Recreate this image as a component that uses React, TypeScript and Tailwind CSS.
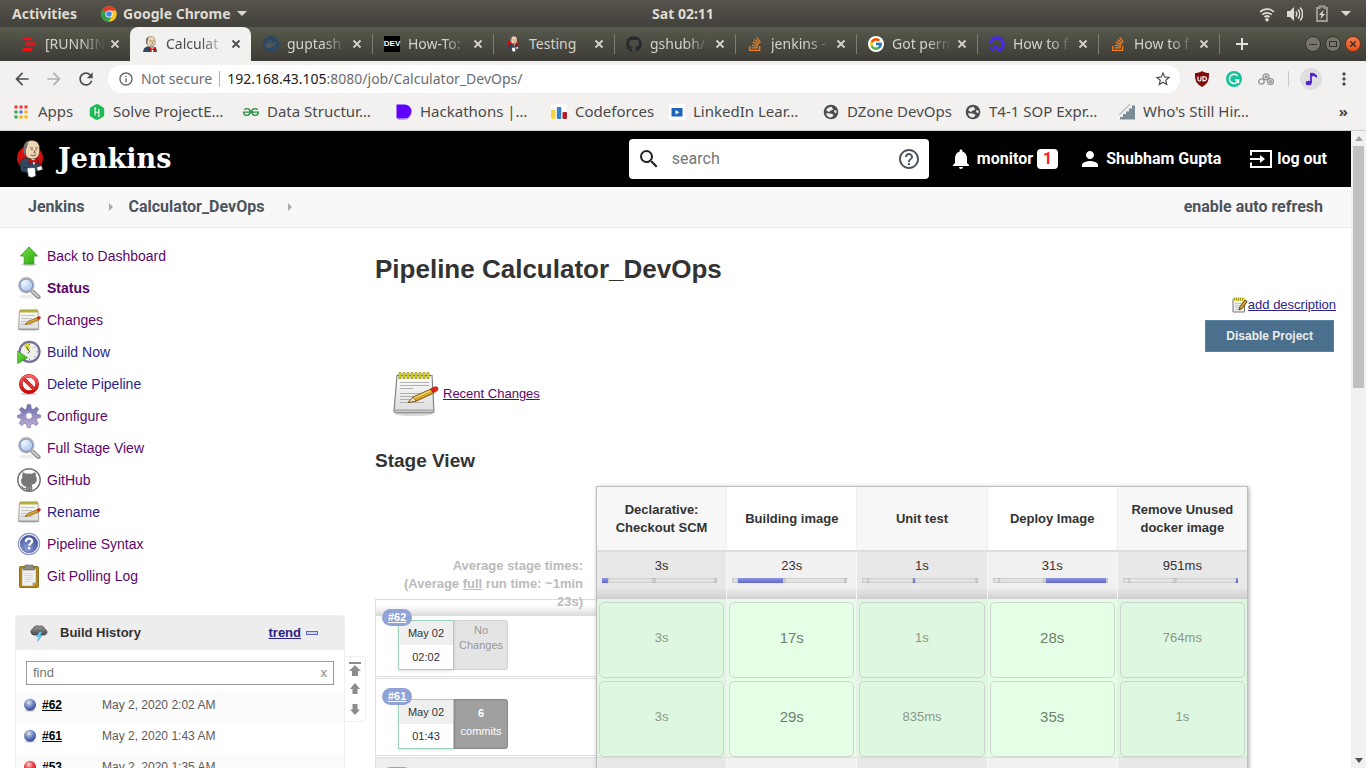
import React from "react";
import { FaGithub, FaStackOverflow, FaDocker, FaHackerrank, FaDigitalOcean } from "react-icons/fa";
import { FcGoogle } from "react-icons/fc";
import { SiGeeksforgeeks } from "react-icons/si";
import { MdNotifications, MdPerson, MdStarBorder, MdHelpOutline, MdSearch, MdRefresh, MdArrowBack, MdArrowForward, MdInfoOutline, MdMoreVert } from "react-icons/md";

type IconProps = { className?: string };

function SharedGradients() {
  return (
    <svg width="0" height="0" className="absolute" aria-hidden="true">
      <defs>
        <linearGradient id="paper" x1="0" y1="0" x2="0" y2="1">
          <stop offset="0" stopColor="#fdfdfd" />
          <stop offset="1" stopColor="#dcdcdc" />
        </linearGradient>
        <linearGradient id="leaf" x1="0" y1="0" x2="1" y2="1">
          <stop offset="0" stopColor="#7be04a" />
          <stop offset="1" stopColor="#1fa80c" />
        </linearGradient>
        <linearGradient id="gear" x1="0" y1="0" x2="0" y2="1">
          <stop offset="0" stopColor="#6a70ab" />
          <stop offset="1" stopColor="#c3acd4" />
        </linearGradient>
        <radialGradient id="lens" cx="0.35" cy="0.3" r="0.8">
          <stop offset="0" stopColor="#f2f8ff" />
          <stop offset="1" stopColor="#9db9ea" />
        </radialGradient>
        <radialGradient id="help" cx="0.4" cy="0.75" r="0.8">
          <stop offset="0" stopColor="#8c9cd8" />
          <stop offset="1" stopColor="#3b4c96" />
        </radialGradient>
        <radialGradient id="ballBlue" cx="0.4" cy="0.3" r="0.7">
          <stop offset="0" stopColor="#e3e9e8" />
          <stop offset="0.45" stopColor="#7e93cb" />
          <stop offset="1" stopColor="#31459a" />
        </radialGradient>
        <radialGradient id="ballRed" cx="0.4" cy="0.3" r="0.7">
          <stop offset="0" stopColor="#ffdcdc" />
          <stop offset="0.45" stopColor="#f0505a" />
          <stop offset="1" stopColor="#c40f1c" />
        </radialGradient>
        <linearGradient id="cloud" x1="0" y1="0" x2="0" y2="1">
          <stop offset="0" stopColor="#9a9a9a" />
          <stop offset="1" stopColor="#4c4c4c" />
        </linearGradient>
        <linearGradient id="ban" x1="0" y1="0" x2="0" y2="1">
          <stop offset="0" stopColor="#f36a6a" />
          <stop offset="1" stopColor="#cc0505" />
        </linearGradient>
      </defs>
    </svg>
  );
}

function ButlerHead() {
  return (
    <>
      <path d="M7.500 6.500C8 2.500 11.500.5 15.500.5c4.500.1 7.500 3 7.500 7.500 0 2.500.2 4-.3 6.200-.7 2.800-3.600 4.800-7 4.800-4 0-6.700-2.500-7.300-6.500z" fill="#efd5b4" stroke="#4b3f32" strokeWidth=".7" />
      <path d="M10.500 2.500C7 4 6 10 7.800 14.500l2-.8c-.8-2.800-.2-5 .8-7 .8-1.700.3-3 1.700-4.500z" fill="#707372" />
      <path d="M13.500 8.300c1-.8 2-.8 3-.1M18.700 8.100c.8-.6 1.700-.5 2.600 0M14.500 9.800h1.600M19 9.800h1.500M17.500 10.300l1.200 2.500-1.700.3M14 15c2 1.100 4.200.9 5.800-.3" fill="none" stroke="#4a3a2a" strokeWidth=".8" />
    </>
  );
}

function Butler({ className }: IconProps) {
  return (
    <svg viewBox="0 0 27 38" className={className} aria-hidden="true">
      <ellipse cx="13.500" cy="18" rx="13" ry="12.200" fill="#d3100f" />
      <path d="M4 21c2-2 5-3.500 9-3.500l7 1.500c2 1 2.500 4 2.500 8l-2 4-8 2-7.500-1.500c-1.500-3-1.500-7.500-1-10.500z" fill="#33475e" stroke="#1b2530" strokeWidth=".6" />
      <ButlerHead />
      <path d="M14.500 19l3 6 3-5.500z" fill="#fff" />
      <path d="M12.300 18.500l4.400 2 4.300-1.800v4.800l-4.300-1.700-4.200 2z" fill="#d3100f" stroke="#6d0505" strokeWidth=".5" />
      <path d="M6 26c3 2.500 7 3 12 1.500" fill="none" stroke="#1f2c3b" strokeWidth=".8" />
      <path d="M10.500 28l8-.5.8 8.500-4 1.500-3.500-1z" fill="#fff" stroke="#333" strokeWidth=".5" />
      <path d="M20 27.500l5-2 1.200 4-5 1.500z" fill="#fff" stroke="#333" strokeWidth=".5" />
    </svg>
  );
}

function ButlerBust({ className }: IconProps) {
  return (
    <svg viewBox="0 0 28 28" className={className} aria-hidden="true">
      <path d="M2 28c0-6 3-9 9-10l11 1c3 1 4 5 4 9z" fill="#33475e" />
      <ButlerHead />
      <path d="M14 20l3.500 8h2L22 20z" fill="#fff" />
      <path d="M12.500 19.500l5.500 3 6-3v7l-6-2.500-5.500 3z" fill="#d3100f" />
    </svg>
  );
}

function ChromeLogo({ className }: IconProps) {
  return (
    <svg viewBox="0 0 16 16" className={className} aria-hidden="true">
      <circle cx="8" cy="8" r="7.800" fill="#f7c52a" />
      <path d="M8 8L1.200 4.200A7.800 7.800 0 0 1 14.900 4.400H8z" fill="#e5372c" />
      <path d="M8 8L1.200 4.200A7.800 7.800 0 0 0 7.600 15.800L11.200 9.800z" fill="#2da04e" />
      <circle cx="8" cy="8" r="3.600" fill="#fff" />
      <circle cx="8" cy="8" r="2.800" fill="#4a86ea" />
    </svg>
  );
}

function Notepad({ className }: IconProps) {
  return (
    <svg viewBox="0 0 48 48" className={className} aria-hidden="true">
      <ellipse cx="23" cy="44" rx="19" ry="2" fill="#000" opacity=".15" />
      <path d="M6 5.500h35l2 35.500q0 1.800-2 1.800H5q-2 0-2-1.800z" fill="url(#paper)" stroke="#7a7a7a" strokeWidth="1.100" />
      <path d="M4 39.500h38.500v1.800H4z" fill="#a8a8a8" />
      <path d="M9 12.500h29M9 15.500h29M9 18.500h13M9 23.500h26M9 26.500h18M9 29.500h15M9 32.500h24" stroke="#b0b0b0" strokeWidth="1" />
      <path d="M9 3.500v4M13 3.500v4M17 3.500v4M21 3.500v4M25 3.500v4M29 3.500v4M33 3.500v4M37 3.500v4" stroke="#8a8400" strokeWidth="3" strokeLinecap="round" />
      <path d="M9 3.500v4M13 3.500v4M17 3.500v4M21 3.500v4M25 3.500v4M29 3.500v4M33 3.500v4M37 3.500v4" stroke="#f4ee2c" strokeWidth="1.300" strokeLinecap="round" />
      <path d="M17 32.500l5-5.500 18-8 2.500 4.200-17.500 8z" fill="#d9a42c" stroke="#6e5010" strokeWidth=".9" />
      <path d="M17 32.500l5-5.500 3 4.200z" fill="#f1deb1" stroke="#6e5010" strokeWidth=".7" />
      <path d="M40 18.500l4-1.700q2.800-.5 3 1.700.2 2-1.600 2.800l-3 1.500z" fill="#e8241c" stroke="#9b120c" strokeWidth=".6" />
      <path d="M23 28l16-7.200" stroke="#f7dc7c" strokeWidth="1.200" />
    </svg>
  );
}

function NotepadSmall({ className }: IconProps) {
  return (
    <svg viewBox="0 0 24 24" className={className} aria-hidden="true">
      <ellipse cx="11.500" cy="22" rx="10" ry="1.200" fill="#000" opacity=".15" />
      <path d="M2.500 3h18.500l.8 18.500H1.500z" fill="url(#paper)" stroke="#979797" strokeWidth=".9" />
      <path d="M2 20h19.500v1H2z" fill="#bdbdbd" />
      <path d="M4 7.500h14M4 10.500h11M4 13.500h5M4 16.500h12" stroke="#c4c4c4" strokeWidth="1" />
      <path d="M3 1.500h17.500v3H3z" fill="#d3cf6a" />
      <path d="M4 1.300v3M6 1.300v3M8 1.300v3M10 1.300v3M12 1.300v3M14 1.300v3M16 1.300v3M18 1.300v3M20 1.300v3" stroke="#8f8a10" strokeWidth=".9" />
      <path d="M8 16.500l2.500-3 10-4 1.500 2.500-9.500 3.700z" fill="#d9a42c" stroke="#80601a" strokeWidth=".7" />
      <path d="M20 9.300l2-.8q1.600 0 1.600 1 0 1.300-1.300 1.700l-1.200.5z" fill="#e32119" stroke="#a3160f" strokeWidth=".4" />
    </svg>
  );
}

function EditNote({ className }: IconProps) {
  return (
    <svg viewBox="0 0 16 16" className={className} aria-hidden="true">
      <path d="M1 2h11.500v13H1z" fill="#f0f0f0" stroke="#777" strokeWidth="1" />
      <path d="M3 6.500h7M3 8.500h6M3 10.500h4M3 12.500h5" stroke="#bbb" strokeWidth=".8" />
      <path d="M1 .8h12v3H1z" fill="#e3dc3a" />
      <path d="M2.500.5v3M4.500.5v3M6.500.5v3M8.500.5v3M10.500.5v3" stroke="#8f8a10" strokeWidth=".8" />
      <path d="M7 13l1-3.500L13 3l2.200 1.500-5 7z" fill="#d9a42c" stroke="#4e3a0c" strokeWidth=".9" />
    </svg>
  );
}

function UpArrow({ className }: IconProps) {
  return (
    <svg viewBox="0 0 24 24" className={className} aria-hidden="true">
      <ellipse cx="12" cy="20.500" rx="8" ry="1.500" fill="#000" opacity=".2" />
      <path d="M12 3l8.500 9h-3.700v8H7.200v-8H3.500z" fill="url(#leaf)" stroke="#3d9b22" strokeWidth=".9" />
    </svg>
  );
}

function Magnifier({ className }: IconProps) {
  return (
    <svg viewBox="0 0 24 24" className={className} aria-hidden="true">
      <ellipse cx="12" cy="20.500" rx="10" ry="2" fill="#000" opacity=".08" />
      <path d="M15.500 15.500l6 5.500" stroke="#828282" strokeWidth="4" strokeLinecap="round" />
      <path d="M15.500 15.500l5.800 5.300" stroke="#c9c9c9" strokeWidth="2.200" strokeLinecap="round" />
      <circle cx="9.300" cy="9.300" r="7.300" fill="url(#lens)" stroke="#b3b3b3" strokeWidth="1.800" />
      <circle cx="9.300" cy="9.300" r="6.200" fill="none" stroke="#6d87c2" strokeWidth=".8" />
    </svg>
  );
}

function ClockPlay({ className }: IconProps) {
  return (
    <svg viewBox="0 0 24 24" className={className} aria-hidden="true">
      <circle cx="12.500" cy="11.800" r="10" fill="#f0f0ea" stroke="#77709c" strokeWidth="2.200" />
      <path d="M12.500 11.800L6.500 5.500A9 9 0 0 1 12.500 3.500z" fill="#d9d53f" />
      <path d="M12.500 11.800L9.500 7M12.500 11.800l-1.500 1.500" stroke="#444" strokeWidth="1" />
      <path d="M12.500 3.500v1.500M12.500 18.500V20M19.500 11.800h1.500M17.800 6.500l-1 1M17.800 17l-1-1" stroke="#777" strokeWidth=".9" />
      <path d="M.7 11v12.500l9.800-5.800z" fill="url(#leaf)" stroke="#27960f" strokeWidth=".7" />
    </svg>
  );
}

function NoEntry({ className }: IconProps) {
  return (
    <svg viewBox="0 0 24 24" className={className} aria-hidden="true">
      <ellipse cx="12" cy="21.800" rx="8" ry="1.400" fill="#000" opacity=".2" />
      <circle cx="12" cy="12" r="8.200" fill="#f8f8f8" stroke="#b81414" strokeWidth="3.600" />
      <path d="M6.300 6.300l11.400 11.400" stroke="#b81414" strokeWidth="3.600" />
      <circle cx="12" cy="12" r="8.200" fill="none" stroke="url(#ban)" strokeWidth="2.800" />
      <path d="M6.300 6.300l11.400 11.400" stroke="#e23030" strokeWidth="2.600" />
    </svg>
  );
}

function Gear({ className }: IconProps) {
  return (
    <svg viewBox="0 0 24 24" className={className} aria-hidden="true">
      <g fill="url(#gear)" stroke="#7d79a8" strokeWidth=".7" fillRule="evenodd">
        <path d="M10.300.6h3.400l.6 4 2 .9 3.300-2.500 2.100 2.300-2.300 3.300.8 1.900 3.300.5v2.400l-3.500.9-.8 2 2.200 3.100-2.300 2.200-3.200-2.100-2 .8-.6 3.200h-3l-.7-3.200-2-.9-3.200 2.200L2.200 19.300l2.100-3.200-.8-1.900-3-.7v-2.300l3.200-.6.8-2L2.300 5.500l2.200-2.300 3.200 2.300 1.900-.8zM12 8.600a3.400 3.400 0 1 0 0 6.800 3.400 3.400 0 0 0 0-6.800z" />
      </g>
    </svg>
  );
}

function Octocat({ className }: IconProps) {
  return (
    <svg viewBox="0 0 24 24" className={className} aria-hidden="true">
      <circle cx="12" cy="12" r="11.200" fill="#fff" stroke="#777" strokeWidth="1.500" />
      <path d="M5.500 4.500c1-.2 2.600.6 3.700 1.300a13 13 0 0 1 5.600 0c1.200-.8 2.700-1.500 3.700-1.300.5 1.200.4 2.300.1 3.200 1.100 1.300 1.400 3 1 5-.6 2.600-2.600 3.700-5 4 .6.700.7 1.500.7 2.300v4.100a11 11 0 0 1-6.600 0v-2c-2.200.4-3.300-.5-3.800-1.800-.3-.7-.7-1.100-1.300-1.500 1.100-.1 1.800.5 2.300 1.200.7 1 1.500 1.400 2.800 1 .1-.6.3-1 .7-1.300-2.500-.4-4.700-1.600-5.200-4.600-.3-1.800.1-3.300 1.200-4.500-.3-1-.4-2 .1-3.100z" fill="#777" />
      <path d="M10.500 18.500v4M13.500 18.500v4" stroke="#aaa" strokeWidth=".7" />
    </svg>
  );
}

function HelpBall({ className }: IconProps) {
  return (
    <svg viewBox="0 0 24 24" className={className} aria-hidden="true">
      <circle cx="12" cy="12" r="10.600" fill="#fff" stroke="#8d98c7" strokeWidth="1.100" />
      <circle cx="12" cy="12" r="8.700" fill="url(#help)" stroke="#4a5899" strokeWidth=".6" />
      <path d="M8.800 9.800c0-4.200 6.500-4 6.400-.6 0 2-3 2.200-3.100 4.600" fill="none" stroke="#fff" strokeWidth="2.200" />
      <rect x="11" y="15" width="2.300" height="2.300" fill="#fff" />
    </svg>
  );
}

function Clipboard({ className }: IconProps) {
  return (
    <svg viewBox="0 0 24 24" className={className} aria-hidden="true">
      <rect x="2.500" y="2.500" width="19" height="21" rx="1" fill="#b8860b" stroke="#7a5a08" strokeWidth=".8" />
      <path d="M5 4.500h14v14L15.500 22H5z" fill="#f1f1f1" stroke="#888" strokeWidth=".5" />
      <path d="M19 18.500h-3.500V22z" fill="#aaa" />
      <path d="M7.500 9.500h8M7.500 11.500h8M7.500 13.500h8M7.500 15.500h7M7.500 17.500h6" stroke="#d8d8d8" strokeWidth="1" />
      <path d="M8 1h8v2.500h1.500V6h-11V3.500H8z" fill="#8d8d86" stroke="#66665f" strokeWidth=".6" />
    </svg>
  );
}

function StormCloud({ className }: IconProps) {
  return (
    <svg viewBox="0 0 18 18" className={className} aria-hidden="true">
      <path d="M4 11a3.200 3.200 0 0 1-1-6.200C4 2 7 1.200 9 2.300c3-1.200 5.500.5 5.500 2.800 3.500.8 3.200 5.400 0 5.900z" fill="url(#cloud)" stroke="#3f3f3f" strokeWidth=".7" />
      <path d="M9.500 8L6.500 12.500h2.300L7.500 17.300l5-6H10L12 8z" fill="#6ed2f5" stroke="#2f9fd0" strokeWidth=".5" />
    </svg>
  );
}

function Ball({ failed }: { failed?: boolean }) {
  return (
    <svg viewBox="0 0 14 14" className="size-[14px]" aria-hidden="true">
      <ellipse cx="7" cy="12.500" rx="5" ry="1" fill="#000" opacity=".2" />
      <circle cx="7" cy="6.800" r="6" fill={failed ? "url(#ballRed)" : "url(#ballBlue)"} />
    </svg>
  );
}

function BlockD({ className }: IconProps) {
  return (
    <svg viewBox="0 0 16 16" className={className} aria-hidden="true">
      <path d="M.5.500H8a7 7 0 0 1 7.500 7A7 7 0 0 1 8 14.500H1.500a1 1 0 0 1-1-1z" fill="#6001ff" />
      <path d="M2 15.500h6.500a7 7 0 0 0 5-2" stroke="#b48bff" strokeWidth=".8" fill="none" />
    </svg>
  );
}

function BarsIcon({ className }: IconProps) {
  return (
    <svg viewBox="0 0 16 16" className={className} aria-hidden="true">
      <rect width="16" height="16" fill="#fff" />
      <rect y="6" width="4.500" height="9" rx="1" fill="#f5d442" />
      <rect x="5.800" y="3" width="4.500" height="12" rx="1" fill="#3a80c9" />
      <rect x="11.500" y="8" width="4.500" height="7" rx="1" fill="#b51f2b" />
    </svg>
  );
}

function PlayTile({ className }: IconProps) {
  return (
    <svg viewBox="0 0 16 16" className={className} aria-hidden="true">
      <rect width="16" height="16" fill="#fff" />
      <rect x="2.500" y="4" width="11" height="8.500" fill="#1c65bd" />
      <path d="M6.500 6v4.500L10.300 8.200z" fill="#fff" />
    </svg>
  );
}

function Globe({ className }: IconProps) {
  return (
    <svg viewBox="0 0 16 16" className={className} aria-hidden="true">
      <circle cx="8" cy="8" r="7.300" fill="#4a4d51" />
      <path d="M3.200 6.500C4 4 6.200 3 9 2.800c-.4 1.300.2 1.800 1.400 1.800-.2 1.500-1.400 1.700-2.600 1.900-1.200.3-.8 1.300-1.800 1.500zM3 9.200c1.800 0 3 .3 4.400.2 1.600 0 1.700 1 3.200 1.200-.3 1.700-1.600 2.900-3 3-2.500-.3-4-2-4.600-4.400zM10.800 6.800c.8-.6 1.800-.7 2.600-.5.200 1 .2 1.900 0 2.800-.9.200-1.700-.2-2-.8z" fill="#f1f0ef" />
    </svg>
  );
}

function Stairs({ className }: IconProps) {
  return (
    <svg viewBox="0 0 16 16" className={className} aria-hidden="true">
      <path d="M1 15.500V13h3V10h3V7.500h3V4.500h3V1.500h3v14z" fill="#7c8c97" />
      <path d="M0 11L11 0" stroke="#b2bcc2" strokeWidth="1.200" />
    </svg>
  );
}

function AppsGrid({ className }: IconProps) {
  const dots = ["#e33", "#e33", "#e33", "#2aa84a", "#4a6ee0", "#f5b400", "#2aa84a", "#f5b400", "#f5b400"];
  return (
    <svg viewBox="0 0 14 14" className={className} aria-hidden="true">
      {dots.map((fill, i) => (
        <rect key={i} x={(i % 3) * 5 + 0.5} y={Math.floor(i / 3) * 5 + 0.5} width="3" height="3" fill={fill} />
      ))}
    </svg>
  );
}

function RedStripes({ className }: IconProps) {
  return (
    <svg viewBox="0 0 16 16" className={className} aria-hidden="true">
      <path d="M1 1h8.500l2.500 3.200H2.500zM4 6.500h9.500l1.500 1.500-1.500 1.800H4.500zM2.500 12H12l-2.500 3.200H1z" fill="#f40d12" />
    </svg>
  );
}

function LogOutIcon({ className }: IconProps) {
  return (
    <svg viewBox="0 0 24 24" className={className} aria-hidden="true">
      <path d="M2 8.500V4h20v16H2v-4.500" fill="none" stroke="currentColor" strokeWidth="2" />
      <path d="M1 11h10V8l5 4-5 4v-3H1z" fill="currentColor" />
    </svg>
  );
}

function DevBadge() {
  return <span className="flex size-4 items-center justify-center bg-black font-['Liberation_Sans',sans-serif] text-[8px] leading-none font-bold text-white">DEV</span>;
}

const tabs = [
  { title: "[RUNNIN", icon: <RedStripes className="size-4" /> },
  { title: "Calculat", icon: <ButlerBust className="size-4" />, active: true },
  { title: "guptash", icon: <FaDocker className="size-4 rounded-full bg-[#2a4864] p-0.5 text-[#50565a]" /> },
  { title: "How-To:", icon: <DevBadge />, line: true },
  { title: "Testing", icon: <Butler className="size-4" />, line: true, whole: true },
  { title: "gshubh/", icon: <FaGithub className="size-4 text-[#24292e]" />, line: true },
  { title: "jenkins -", icon: <FaStackOverflow className="size-4 text-[#f48024]" />, line: true },
  { title: "Got perm", icon: <FcGoogle className="size-4 rounded-full bg-white p-px" />, line: true },
  { title: "How to f", icon: <FaDigitalOcean className="size-4 text-[#4a27f0]" />, line: true },
  { title: "How to f", icon: <FaStackOverflow className="size-4 text-[#f48024]" />, line: true },
];

function CloseX({ className }: IconProps) {
  return (
    <svg viewBox="0 0 10 10" className={className} aria-hidden="true">
      <path d="M1.500 1.500l7 7M8.500 1.500l-7 7" stroke="currentColor" strokeWidth="1.800" />
    </svg>
  );
}

function SystemBar() {
  return (
    <div className="grid h-[27px] shrink-0 grid-cols-[1fr_auto_1fr] items-center bg-linear-to-b from-[#57534c] to-[#42413b] px-3 text-sm font-bold text-[#dfdbd2]">
      <div className="flex items-center gap-6">
        <button>Activities</button>
        <button className="flex items-center gap-1.5">
          <ChromeLogo className="size-4" />
          Google Chrome
          <span className="border-x-[5px] border-t-[5px] border-x-transparent border-t-[#dfdbd2]" />
        </button>
      </div>
      <span>Sat 02:11</span>
      <div className="flex items-center justify-end gap-3">
        <svg viewBox="0 0 16 16" className="size-4" aria-label="Wi-Fi">
          <path d="M1 6a10 10 0 0 1 14 0M3.300 8.700a6.800 6.800 0 0 1 9.400 0M5.500 11.200a3.600 3.600 0 0 1 5 0" fill="none" stroke="currentColor" strokeWidth="1.700" />
          <circle cx="8" cy="13.700" r="1.800" fill="currentColor" />
        </svg>
        <svg viewBox="0 0 16 16" className="size-4" aria-label="Volume">
          <path d="M0 5h3l4-4v14l-4-4H0z" fill="currentColor" />
          <path d="M8.800 5.500a4 4 0 0 1 0 5M11 3.500a7 7 0 0 1 0 9M13.200 1.500a10 10 0 0 1 0 13" fill="none" stroke="currentColor" strokeWidth="1.500" />
        </svg>
        <svg viewBox="0 0 14 18" className="h-[18px] w-[14px]" aria-label="Battery">
          <path d="M2 3h2.500V1.500h5V3H12v13H2z" fill="none" stroke="#a09d96" strokeWidth="1.800" />
          <path d="M8.500 5L4 10h2.500L5.500 14 10 9H7.500z" fill="currentColor" />
        </svg>
        <span className="mr-[3px] border-x-[5px] border-t-[5px] border-x-transparent border-t-[#dfdbd2]" />
      </div>
    </div>
  );
}

function TabStrip() {
  return (
    <div className="flex h-[34px] shrink-0 items-stretch bg-linear-to-b from-[#585a4c] to-[#3d3c37] pl-[9px] text-sm text-[#d6d2c9]">
      {tabs.map((tab, i) => (
        <div
          key={i}
          className={
            tab.active
              ? "flex w-[121px] items-center rounded-t-lg bg-[#f2f1f0] pr-2 pl-3 text-[#4b4b4b]"
              : "flex w-[121px] items-center pr-2"
          }
        >
          {!tab.active && <span className={tab.line ? "mr-[11px] h-5 w-px bg-[#7f7e74]" : "mr-[11px] w-px"} />}
          {tab.icon}
          <span className={tab.whole ? "ml-2 w-[60px] whitespace-nowrap" : "ml-2 w-[60px] mask-r-from-60% whitespace-nowrap"}>{tab.title}</span>
          <button aria-label="Close tab" className="ml-[5px]">
            <CloseX className="size-[10px]" />
          </button>
        </div>
      ))}
      <span className="my-auto h-5 w-px bg-[#7f7e74]" />
      <button aria-label="New tab" className="ml-4 text-[#e4e1da]">
        <svg viewBox="0 0 12 12" className="size-3">
          <path d="M6 0v12M0 6h12" stroke="currentColor" strokeWidth="2" />
        </svg>
      </button>
      <div className="ml-auto flex items-center gap-1 pr-[5px] text-[#33322e]">
        <button aria-label="Minimize" className="flex size-4 items-center justify-center rounded-full border border-[#33322e] bg-[#77756c]">
          <span className="h-px w-2 bg-current" />
        </button>
        <button aria-label="Maximize" className="flex size-4 items-center justify-center rounded-full border border-[#33322e] bg-[#77756c]">
          <span className="h-[6px] w-2 border border-current" />
        </button>
        <button aria-label="Close" className="flex size-4 items-center justify-center rounded-full border border-[#7a2f12] bg-linear-to-b from-[#f37b4b] to-[#e8500f]">
          <CloseX className="size-2" />
        </button>
      </div>
    </div>
  );
}

function Toolbar() {
  return (
    <div className="flex h-9 shrink-0 items-center bg-[#f2f1f0] pl-3 text-sm text-[#4a4d51]">
      <button aria-label="Back" className="w-8"><MdArrowBack className="size-5" /></button>
      <button aria-label="Forward" className="w-8 text-[#b0b0b0]"><MdArrowForward className="size-5" /></button>
      <button aria-label="Reload" className="w-8"><MdRefresh className="size-5" /></button>
      <div className="flex h-7 flex-1 items-center rounded-full bg-white pr-2 pl-2.5">
        <MdInfoOutline className="size-4 text-[#5f6368]" />
        <span className="ml-[7px] text-[#6a6d71]">Not secure</span>
        <span className="mx-[7px] h-4 w-px bg-[#b5b5b5]" />
        <span className="flex-1 text-[#6a6d71]"><span className="text-[#222]">192.168.43.105</span>:8080/job/Calculator_DevOps/</span>
        <button aria-label="Bookmark this page"><MdStarBorder className="size-[18px]" /></button>
      </div>
      <div className="flex items-center gap-4 pl-[14px]">
        <svg viewBox="0 0 16 16" className="size-4" aria-label="uBlock">
          <path d="M8 0c2 1.500 5 2 7 2 0 6 0 10-7 14C1 12 1 8 1 2c2 0 5-.5 7-2z" fill="#800a0a" />
          <path d="M4 5.500v3q0 1.500 1.500 1.500T7 8.500v-3M9 9.500v-4q3.500 0 3.500 2.200T9 9.800z" fill="none" stroke="#fff" strokeWidth="1.200" />
        </svg>
        <svg viewBox="0 0 16 16" className="size-4" aria-label="Grammarly">
          <circle cx="8" cy="8" r="8" fill="#15c39a" />
          <path d="M11.500 4.800A4.600 4.600 0 1 0 12.500 9H9M12.500 8.500V12" fill="none" stroke="#fff" strokeWidth="1.500" />
        </svg>
        <svg viewBox="0 0 16 16" className="size-4 text-[#909090]" aria-label="Extension">
          <g fill="none" stroke="currentColor" strokeWidth="1.200">
            <circle cx="3.500" cy="10.500" r="2.700" />
            <circle cx="8" cy="5.800" r="3" />
            <circle cx="12.500" cy="10.500" r="2.900" />
            <circle cx="8" cy="5.800" r="1" />
            <circle cx="12.500" cy="10.500" r="1" />
          </g>
        </svg>
      </div>
      <span className="ml-[14px] h-4 w-px bg-[#c9c9c9]" />
      <button aria-label="Music" className="ml-[11px] flex size-[22px] items-center justify-center rounded-full bg-[#dededf]">
        <svg viewBox="0 0 14 14" className="size-[14px]">
          <path d="M7 1.500v9.500" stroke="#5223cf" strokeWidth="1.800" />
          <ellipse cx="4.700" cy="11" rx="3" ry="2.300" fill="#5223cf" />
          <path d="M6.100 1C9 0 11 1.500 13 3.500V6C11 4 9.500 4 7 4.500z" fill="#5223cf" />
        </svg>
      </button>
      <button aria-label="Menu" className="mx-3"><MdMoreVert className="size-5" /></button>
    </div>
  );
}

function Bookmarks() {
  const label = "ml-2 whitespace-nowrap";
  return (
    <nav className="flex h-[34px] shrink-0 items-center border-b border-[#cfcecd] bg-[#f2f1f0] pb-1 pl-[14px] text-[15px] text-[#4a4a4a]">
      <a href="#apps" className="flex w-[75px] items-center"><AppsGrid className="mr-0.5 size-[14px]" /><span className={label}>Apps</span></a>
      <a href="#hr" className="flex w-[154px] items-center"><FaHackerrank className="size-4 text-[#1fba55]" /><span className={label}>Solve ProjectE…</span></a>
      <a href="#gfg" className="flex w-[153px] items-center"><SiGeeksforgeeks className="size-4 text-[#2f8d46]" /><span className={label}>Data Structur…</span></a>
      <a href="#hack" className="flex w-[155px] items-center"><BlockD className="size-4" /><span className={label}>Hackathons |…</span></a>
      <a href="#cf" className="flex w-[118px] items-center"><BarsIcon className="size-4" /><span className={label}>Codeforces</span></a>
      <a href="#li" className="flex w-[154px] items-center"><PlayTile className="size-4" /><span className={label}>LinkedIn Lear…</span></a>
      <a href="#dz" className="flex w-[142px] items-center"><Globe className="size-4" /><span className={label}>DZone DevOps</span></a>
      <a href="#t4" className="flex w-[154px] items-center"><Globe className="size-4" /><span className={label}>T4-1 SOP Expr…</span></a>
      <a href="#wh" className="flex items-center"><Stairs className="size-4" /><span className={label}>Who's Still Hir…</span></a>
      <button aria-label="More bookmarks" className="mr-[18px] ml-auto font-bold">»</button>
    </nav>
  );
}

function JenkinsHeader() {
  return (
    <header className="flex h-14 items-center bg-black pr-6 pl-4 font-[Roboto,sans-serif] text-base font-bold text-white">
      <a href="#home" className="flex items-center gap-[14px]">
        <Butler className="h-[38px] w-[28px]" />
        <span className="font-['DejaVu_Serif',serif] text-[27px] leading-9">Jenkins</span>
      </a>
      <form className="ml-auto flex h-10 w-[300px] items-center rounded bg-white px-2 font-normal">
        <MdSearch className="size-6 text-[#222]" />
        <input aria-label="search" placeholder="search" className="ml-[11px] min-w-0 flex-1 outline-none placeholder:text-[#757575]" />
        <MdHelpOutline className="size-6 text-[#4d545d]" />
      </form>
      <a href="#monitor" className="ml-5 flex items-center">
        <MdNotifications className="size-6" />
        <span className="ml-1">monitor</span>
        <span className="ml-1 rounded bg-white px-[6px] leading-5 text-[#fa1c25]">1</span>
      </a>
      <a href="#user" className="ml-5 flex items-center gap-1"><MdPerson className="size-6" />Shubham Gupta</a>
      <a href="#logout" className="ml-7 flex items-center gap-1"><LogOutIcon className="size-6" />log out</a>
    </header>
  );
}

function Crumbs() {
  return (
    <nav className="flex h-[41px] items-center border-b border-[#e7e7e7] bg-[#f8f8f8] pr-7 pl-7 font-[Roboto,sans-serif] text-base font-bold text-[#4d545d]">
      <a href="#root">Jenkins</a>
      <span className="mr-4 ml-6 border-y-4 border-l-4 border-y-transparent border-l-[#a9a9a9]" />
      <a href="#job">Calculator_DevOps</a>
      <span className="ml-6 border-y-4 border-l-4 border-y-transparent border-l-[#a9a9a9]" />
      <a href="#refresh" className="ml-auto">enable auto refresh</a>
    </nav>
  );
}

const visited = "text-[#5c076b]";
const fresh = "text-[#2b2389]";
const tasks = [
  { text: "Back to Dashboard", Icon: UpArrow, tone: visited },
  { text: "Status", Icon: Magnifier, tone: "font-bold text-[#5c076b]" },
  { text: "Changes", Icon: NotepadSmall, tone: visited },
  { text: "Build Now", Icon: ClockPlay, tone: fresh },
  { text: "Delete Pipeline", Icon: NoEntry, tone: fresh },
  { text: "Configure", Icon: Gear, tone: visited },
  { text: "Full Stage View", Icon: Magnifier, tone: visited },
  { text: "GitHub", Icon: Octocat, tone: visited },
  { text: "Rename", Icon: NotepadSmall, tone: fresh },
  { text: "Pipeline Syntax", Icon: HelpBall, tone: visited },
  { text: "Git Polling Log", Icon: Clipboard, tone: visited },
];

const builds = [
  { id: "#62", when: "May 2, 2020 2:02 AM" },
  { id: "#61", when: "May 2, 2020 1:43 AM" },
  { id: "#53", when: "May 2, 2020 1:35 AM", failed: true },
];

function Pager({ kind }: { kind: "top" | "up" | "down" }) {
  const paths = {
    top: "M1 0h12v2H1zM7 3l6 6H10v5H4V9H1z",
    up: "M7 1l5 6H9.500v5h-5V7H2z",
    down: "M7 13L2 7.500h2.500V2h5v5.500H12z",
  };
  return (
    <button aria-label={kind} className="block">
      <svg viewBox="0 0 14 14" className="size-[14px]">
        <path d={paths[kind]} fill="#8c8c8c" />
      </svg>
    </button>
  );
}

function Sidebar() {
  return (
    <aside className="w-[375px] shrink-0 pt-3">
      <ul className="pl-[17px] text-sm">
        {tasks.map(({ text, Icon, tone }) => (
          <li key={text} className="flex h-8 items-center gap-[6px]">
            <Icon className="size-6" />
            <a href="#task" className={tone}>{text}</a>
          </li>
        ))}
      </ul>
      <div className="mt-[23px] flex items-start pl-[15px]">
        <section className="w-[330px] rounded-t border border-[#efefef] pb-10">
          <div className="flex h-[34px] items-center bg-[#ededed] pr-[26px] pl-[14px] text-[13px] font-bold text-[#333]">
            <StormCloud className="size-[18px]" />
            <h2 className="ml-3">Build History</h2>
            <a href="#trend" className="mr-[5px] ml-auto text-[#2b2389] underline">trend</a>
            <span className="h-1 w-3 border border-[#5a62c4] bg-[#cfd6f4]" />
          </div>
          <div className="mx-[10px] mt-[11px] flex h-6 items-center border border-[#9a9a9a] px-1.5 text-[13px]">
            <input aria-label="find" placeholder="find" className="min-w-0 flex-1 outline-none placeholder:text-[#757575]" />
            <button aria-label="Clear" className="leading-4 text-[#888]">x</button>
          </div>
          <table className="mt-[7px] w-full text-left text-xs">
            <tbody>
              {builds.map((b) => (
                <tr key={b.id} className="h-[31px] align-middle odd:bg-[#fbfbfb]">
                  <td className="w-[26px] pb-1.5 pl-[7px]"><Ball failed={b.failed} /></td>
                  <td className="w-[60px] pb-1.5"><a href="#build" className="font-bold text-black underline">{b.id}</a></td>
                  <td className="pb-1.5 text-[#5c5c5c]">{b.when}</td>
                </tr>
              ))}
            </tbody>
          </table>
        </section>
        <div className="mt-[41px] flex h-[66px] w-[21px] flex-col items-center justify-between rounded-r border border-l-0 border-[#efefef] py-[5px]">
          <Pager kind="top" />
          <Pager kind="up" />
          <Pager kind="down" />
        </div>
      </div>
    </aside>
  );
}

const stages = [
  { name: "Declarative: Checkout SCM", avg: "3s", weight: 6 },
  { name: "Building image", avg: "23s", weight: 45 },
  { name: "Unit test", avg: "1s", weight: 2 },
  { name: "Deploy Image", avg: "31s", weight: 60 },
  { name: "Remove Unused docker image", avg: "951ms", weight: 2 },
];

const runs = [
  { id: "#62", date: "May 02", time: "02:02", commits: 0, cells: ["3s", "17s", "1s", "28s", "764ms"] },
  { id: "#61", date: "May 02", time: "01:43", commits: 6, cells: ["3s", "29s", "835ms", "35s", "1s"] },
];

function StageMeter({ current }: { current: number }) {
  return (
    <div className="mr-[9px] ml-[5px] flex h-[5px]">
      {stages.map((s, i) => (
        <span
          key={s.name}
          style={{ flexGrow: s.weight }}
          className={i === current ? "basis-0 bg-linear-to-b from-[#8b97dc] to-[#6466cf] shadow-xs" : "basis-0 bg-[#e4e4e4] inset-shadow-[0_0_2px_#999]"}
        />
      ))}
    </div>
  );
}

function RunBadge({ id }: { id: string }) {
  return <a href="#run" className="absolute top-[9px] left-[6px] rounded-full bg-[#8fa3d6] px-1.5 text-[11px] leading-[17px] font-bold text-white underline">{id}</a>;
}

function StageView() {
  return (
    <div className="relative mt-[14px] w-[873px]">
      <table className="w-full table-fixed border-separate border-spacing-0 text-center text-[13px] text-[#333]">
        <colgroup>
          <col className="w-[222px]" />
          <col span={5} />
        </colgroup>
        <thead>
          <tr className="h-[65px]">
            <td />
            {stages.map((s) => (
              <th key={s.name} className="border-r border-b-2 border-r-[#eee] border-b-[#ddd] px-2 leading-[18px] odd:bg-white even:bg-[#f7f7f7]">{s.name}</th>
            ))}
          </tr>
          <tr className="h-[47px] align-top">
            <th className="p-0 text-right leading-[18px] text-[#bbb]">
              <div className="relative z-10 ml-5 h-[47px] pt-[5px] pr-[14px]">
                Average stage times:
                <br />
                (Average <span className="underline">full</span> run time: ~1min 23s)
              </div>
            </th>
            {stages.map((s, i) => (
              <td key={s.name} className="border-r border-r-[#f8f8f8] bg-linear-to-b from-transparent from-75% to-[#cfcfcf] p-0 pt-[5px] odd:bg-[#f1f1f1] even:bg-[#e8e8e8]">
                <div className="mb-[3px] leading-[18px]">{s.avg}</div>
                <StageMeter current={i} />
              </td>
            ))}
          </tr>
        </thead>
        <tbody>
          {runs.map((run, r) => (
            <tr key={run.id} className="h-[79px]">
              <td className="p-0 pb-px align-top">
                <div className={r === 0 ? "relative h-[78px] border border-[#ddd] bg-linear-to-b from-transparent from-35% to-[#dadada] bg-[length:100%_16px] bg-no-repeat pt-5 pl-[22px]" : "relative h-[78px] border border-[#ddd] pt-5 pl-[22px]"}>
                  <div className="flex h-[50px] text-[11px]">
                    <div className="w-[56px] border border-[#9fd3bb] bg-white shadow-sm">
                      <div className="bg-[#efefef] leading-6">{run.date}</div>
                      <div className="leading-6">{run.time}</div>
                    </div>
                    {run.commits ? (
                      <div className="w-[54px] rounded-r bg-[#9f9f9f] pt-[5px] leading-[18px] text-white inset-shadow-[0_0_2px_#555]"><b>{run.commits}</b><br />commits</div>
                    ) : (
                      <div className="w-[54px] rounded-r bg-[#e4e4e4] pt-[3px] leading-[15px] text-[#999] inset-shadow-[0_0_2px_#aaa]">No<br />Changes</div>
                    )}
                  </div>
                  <RunBadge id={run.id} />
                </div>
              </td>
              {run.cells.map((c, i) => (
                <td key={i} className="border-r border-r-[#eee] px-0.5 pt-[3px] pb-0 odd:bg-[#e4ffe6] even:bg-[#def7e0]">
                  <div className={i % 2 ? "h-[76px] rounded-[5px] border border-[#d0d6d0] pt-[24px] text-[15px] leading-[22px] text-[#6f7f70]" : "h-[76px] rounded-[5px] border border-[#cdd4cd] pt-[24px] leading-[22px] text-[#8a998b]"}>{c}</div>
                </td>
              ))}
            </tr>
          ))}
          <tr className="h-[79px]">
            <td className="p-0 align-top">
              <div className="relative h-[78px] border border-[#ddd] bg-[#eee]"><RunBadge id="#53" /></div>
            </td>
            {stages.map((s) => (
              <td key={s.name} className="border-t border-r border-t-[#ddd] border-r-[#fafafa] odd:bg-[#f1f1f1] even:bg-[#e8e8e8]" />
            ))}
          </tr>
        </tbody>
      </table>
      <div className="pointer-events-none absolute -top-px right-0 bottom-0 left-[221px] border border-[#bfbfbf] shadow-[1px_1px_4px_#aaa]" />
    </div>
  );
}

function ProjectPage() {
  return (
    <main className="min-w-0 flex-1 pt-6 pr-[15px]">
      <h1 className="text-[26px] leading-[34px] font-bold text-[#333]">Pipeline Calculator_DevOps</h1>
      <div className="mt-[10px] flex flex-col items-end gap-[6px]">
        <a href="#describe" className="flex items-center text-[13px] leading-[18px] text-[#2b2389] underline">
          <EditNote className="size-4" />add description
        </a>
        <button className="mr-0.5 h-8 border border-[#5684a4] bg-[#4b708d] px-5 text-xs font-bold text-[#ececec]">Disable Project</button>
      </div>
      <div className="mt-[18px] flex h-12 items-center gap-1 pl-4">
        <Notepad className="size-12" />
        <a href="#changes" className="text-[13px] text-[#5c076b] underline">Recent Changes</a>
      </div>
      <h2 className="mt-[31px] text-[19px] leading-6 font-bold text-[#333]">Stage View</h2>
      <StageView />
    </main>
  );
}

function Scrollbar() {
  return (
    <div className="flex w-[15px] shrink-0 flex-col items-center bg-[#f1f1f1]" aria-hidden="true">
      <span className="my-[5px] border-x-4 border-b-[5px] border-x-transparent border-b-[#a3a3a3]" />
      <span className="h-[38%] w-[11px] bg-[#c1c1c1]" />
      <span className="mt-auto mb-[5px] border-x-4 border-t-[5px] border-x-transparent border-t-[#505050]" />
    </div>
  );
}

export default function App() {
  return (
    <div className="flex h-screen flex-col overflow-hidden bg-white font-['Noto_Sans',sans-serif]">
      <SharedGradients />
      <SystemBar />
      <TabStrip />
      <Toolbar />
      <Bookmarks />
      <div className="flex min-h-0 flex-1">
        <div className="min-w-0 flex-1 overflow-hidden font-['Liberation_Sans',Arial,sans-serif]">
          <JenkinsHeader />
          <Crumbs />
          <div className="flex">
            <Sidebar />
            <ProjectPage />
          </div>
        </div>
        <Scrollbar />
      </div>
    </div>
  );
}
